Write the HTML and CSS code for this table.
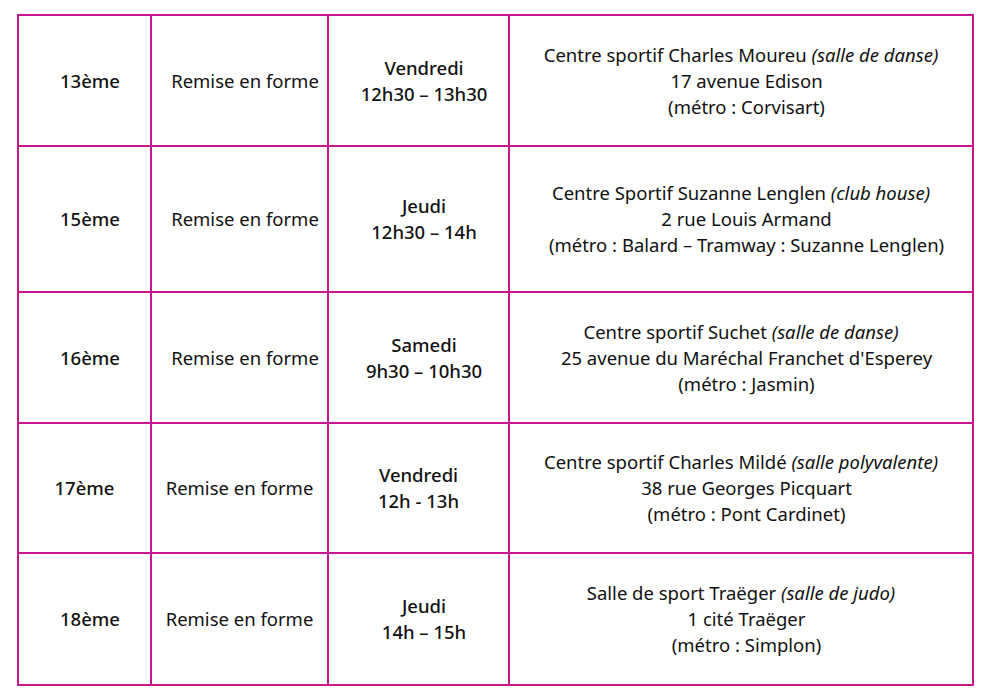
FILE: index.html
```html
<!DOCTYPE html>
<html lang="fr">
<head>
<meta charset="utf-8">
<link rel="stylesheet" href="styles.css">
</head>
<body>
<table class="planning">
  <colgroup>
    <col class="c-arr"><col class="c-act"><col class="c-hor"><col class="c-lieu">
  </colgroup>
  <tr class="r1">
    <td class="arr shift">13ème</td>
    <td class="act shift">Remise en forme</td>
    <td class="hor shift">Vendredi<br>12h30 – 13h30</td>
    <td class="lieu"><div class="l1">Centre sportif Charles Moureu <em>(salle de danse)</em></div><div class="l2">17 avenue Edison</div><div class="l2">(métro : Corvisart)</div></td>
  </tr>
  <tr class="r2">
    <td class="arr shift">15ème</td>
    <td class="act shift">Remise en forme</td>
    <td class="hor shift">Jeudi<br>12h30 – 14h</td>
    <td class="lieu"><div class="l1">Centre Sportif Suzanne Lenglen <em>(club house)</em></div><div class="l2">2 rue Louis Armand</div><div class="l2">(métro : Balard – Tramway : Suzanne Lenglen)</div></td>
  </tr>
  <tr class="r3">
    <td class="arr shift">16ème</td>
    <td class="act shift">Remise en forme</td>
    <td class="hor shift">Samedi<br>9h30 – 10h30</td>
    <td class="lieu"><div class="l1">Centre sportif Suchet <em>(salle de danse)</em></div><div class="l2">25 avenue du Maréchal Franchet d'Esperey</div><div class="l2">(métro : Jasmin)</div></td>
  </tr>
  <tr class="r4">
    <td class="arr">17ème</td>
    <td class="act">Remise en forme</td>
    <td class="hor">Vendredi<br>12h - 13h</td>
    <td class="lieu"><div class="l1">Centre sportif Charles Mildé <em>(salle polyvalente)</em></div><div class="l2">38 rue Georges Picquart</div><div class="l2">(métro : Pont Cardinet)</div></td>
  </tr>
  <tr class="r5">
    <td class="arr shift">18ème</td>
    <td class="act">Remise en forme</td>
    <td class="hor shift">Jeudi<br>14h – 15h</td>
    <td class="lieu"><div class="l1">Salle de sport Traëger <em>(salle de judo)</em></div><div class="l2">1 cité Traëger</div><div class="l2">(métro : Simplon)</div></td>
  </tr>
</table>
</body>
</html>
```
FILE: styles.css
```css
html, body {
  margin: 0;
  padding: 0;
  background: #ffffff;
}
body {
  padding: 14px 0 0 17px;
  font-family: "Noto Sans", "Open Sans", sans-serif;
  font-size: 18.5px;
  line-height: 26px;
  color: #111111;
}
.planning {
  border-collapse: collapse;
  width: 955px;
  table-layout: fixed;
}
.c-arr { width: 133px; }
.c-act { width: 177px; }
.c-hor { width: 181px; }
.c-lieu { width: 464px; }
.planning td {
  border: 2px solid #c8168f;
  text-align: center;
  vertical-align: middle;
  padding: 0;
}
.r1 td { height: 129px; }
.r2 td { height: 144px; }
.r3 td { height: 129px; }
.r4 td { height: 128px; }
.r5 td { height: 130px; }
.arr, .hor {
  font-weight: 500;
}
.shift {
  padding-left: 11px !important;
}
.l2 {
  padding-left: 11px;
}
em {
  font-style: italic;
}
```
